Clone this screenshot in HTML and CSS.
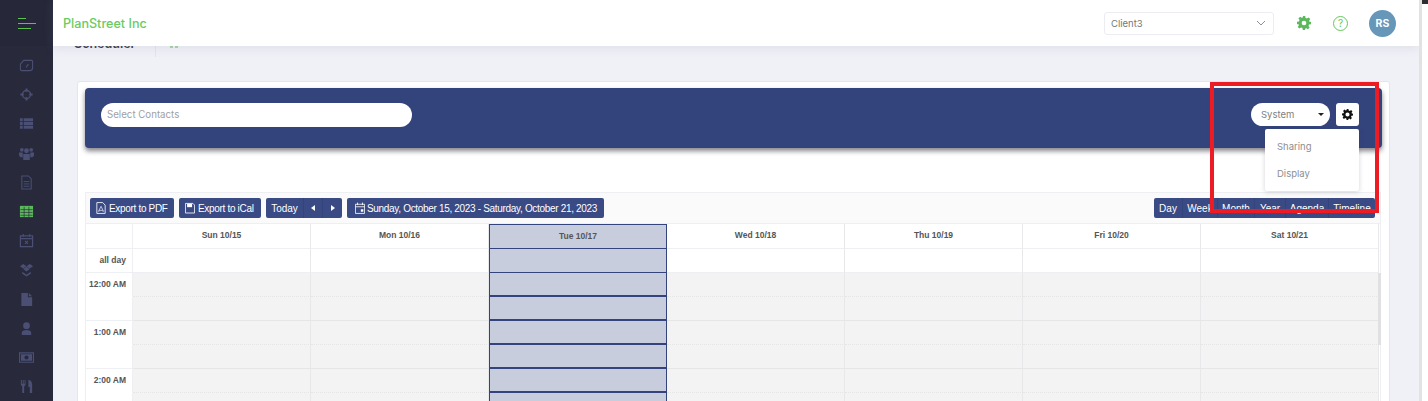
FILE: index.html
```html
<!DOCTYPE html>
<html lang="en">
<head>
<meta charset="utf-8">
<title>Scheduler</title>
<link rel="stylesheet" href="styles.css">
</head>
<body>
<aside class="sidebar">
  <div class="brand">
    <svg class="burger" width="18" height="12" viewBox="0 0 18 12"><path d="M0 .5h8M0 5.500h18M0 10.500h13" stroke="#5cc24f" stroke-width="1" fill="none"/></svg>
  </div>
  <nav class="nav">
    <svg class="ico" viewBox="0 0 16 16"><path d="M5 2.500h8.500a1 1 0 0 1 1 1v7a3 3 0 0 1-3 3H3a1.500 1.500 0 0 1-1.500-1.500V6.500z" fill="none" stroke="currentColor" stroke-width="1.200"/><path d="M7.500 10l2.500-3.500" stroke="currentColor" stroke-width="1.200"/></svg>
    <svg class="ico" viewBox="0 0 16 16"><circle cx="8" cy="8" r="4.300" fill="none" stroke="currentColor" stroke-width="1.400"/><path d="M8 1.500v3.500M8 11v3.500M1.500 8H5M11 8h3.500" stroke="currentColor" stroke-width="2.200"/></svg>
    <svg class="ico" viewBox="0 0 16 16"><path d="M1 2.500h3v3H1zM5 2.500h10v3H5zM1 6.500h3v3H1zM5 6.500h10v3H5zM1 10.500h3v3H1zM5 10.500h10v3H5z" fill="currentColor"/></svg>
    <svg class="ico" viewBox="0 0 16 16"><circle cx="3" cy="4" r="2" fill="currentColor"/><circle cx="13" cy="4" r="2" fill="currentColor"/><circle cx="8" cy="5" r="2.600" fill="currentColor"/><path d="M0 7h4v5H1.500L0 10zM12 7h4v3l-1.500 2H12zM4.500 8.500h7V15h-7z" fill="currentColor"/></svg>
    <svg class="ico" viewBox="0 0 16 16"><path d="M3 1h7l3 3v11H3z" fill="none" stroke="currentColor" stroke-width="1.100"/><path d="M5 7h6M5 9.500h6M5 12h6" stroke="currentColor"/></svg>
    <svg class="ico ico-on" viewBox="0 0 16 16"><path d="M1 2h14v12H1z" fill="currentColor"/><path d="M1.500 6h13M1.500 9h13M1.500 12h13M5.500 3v11M10.500 3v11" stroke="#282a3c" stroke-width=".7"/></svg>
    <svg class="ico" viewBox="0 0 16 16"><path d="M1.500 3h13v11.500h-13zM1.500 6h13" fill="none" stroke="currentColor" stroke-width="1.300"/><path d="M4.500 1v3M11.500 1v3M6.500 8.500l3 3M9.500 8.500l-3 3" stroke="currentColor" stroke-width="1.200"/></svg>
    <svg class="ico" viewBox="0 0 16 16"><path d="M4.500 2l3.500 2.500L4.500 7 1 4.500zM11.500 2L15 4.500 11.500 7 8 4.500zM4.500 7.500L8 5l3.500 2.500L8 10zM3.500 10.500L8 13.500l4.500-3v2L8 15.500l-4.500-3z" fill="currentColor"/></svg>
    <svg class="ico" viewBox="0 0 16 16"><path d="M2.500 1h7v4.500H14V15H2.500zM10.500 1L14 4.500h-3.500z" fill="currentColor"/></svg>
    <svg class="ico" viewBox="0 0 16 16"><circle cx="8" cy="5" r="3.600" fill="currentColor"/><path d="M3 15v-2.500C3 10.500 5 9.500 8 9.500s5 1 5 3V15z" fill="currentColor"/></svg>
    <svg class="ico" viewBox="0 0 16 16"><path d="M.5 3h15v10H.5z" fill="none" stroke="currentColor" stroke-width="1.200"/><path d="M2 4.500h12v7H2z" fill="currentColor"/><circle cx="8" cy="8" r="2.200" fill="#282a3c"/></svg>
    <svg class="ico" viewBox="0 0 16 16"><path d="M2 1v5l1.500 2v7h2V8L7 6V1H6v4H5V1H4v4H3V1zM10 8.500V1c2.500 0 4 2 4 5v9h-2.500V8.500z" fill="currentColor"/></svg>
  </nav>
</aside>

<div class="main">
  <header class="topbar">
    <div class="company">PlanStreet Inc</div>
    <div class="client">
      <span>Client3</span>
      <svg width="10" height="6" viewBox="0 0 10 6"><path d="M1 1l4 4 4-4" fill="none" stroke="#8a8f99" stroke-width="1"/></svg>
    </div>
    <svg class="top-gear" width="14" height="14" viewBox="0 0 24 24"><path fill="#5cb85c" fill-rule="evenodd" d="M10 0h4l.7 3.300 2.300 1 2.900-1.900 2.800 2.800-1.900 2.900 1 2.300L24 10v4l-3.300.7-1 2.300 1.900 2.900-2.800 2.800-2.900-1.900-2.300 1L14 24h-4l-.7-3.300-2.300-1-2.900 1.900-2.800-2.800 1.900-2.900-1-2.300L0 14v-4l3.300-.7 1-2.300-1.900-2.900 2.800-2.800 2.900 1.900 2.300-1zM12 8a4 4 0 1 0 0 8 4 4 0 0 0 0-8z"/></svg>
    <span class="help">?</span>
    <span class="avatar">RS</span>
  </header>

  <div class="content">
    <div class="subheader">
      <h1 class="page-title">Scheduler</h1>
      <span class="crumb"></span>
    </div>
    <section class="card">
      <div class="banner">
        <div class="contacts">Select Contacts</div>
        <div class="banner-tools">
          <div class="system"><span>System</span><i class="caret"></i></div>
          <button class="gear-btn" type="button" aria-label="Settings">
            <svg width="11" height="11" viewBox="0 0 24 24"><path fill="#111" fill-rule="evenodd" d="M10 0h4l.7 3.300 2.300 1 2.900-1.900 2.800 2.800-1.900 2.900 1 2.300L24 10v4l-3.300.7-1 2.300 1.900 2.900-2.800 2.800-2.900-1.900-2.300 1L14 24h-4l-.7-3.300-2.300-1-2.900 1.900-2.800-2.800 1.900-2.900-1-2.300L0 14v-4l3.300-.7 1-2.300-1.900-2.900 2.800-2.800 2.900 1.900 2.300-1zM12 7.500a4.500 4.500 0 1 0 0 9 4.500 4.500 0 0 0 0-9z"/></svg>
          </button>
          <div class="menu">
            <div class="menu-item">Sharing</div>
            <div class="menu-item">Display</div>
          </div>
        </div>
      </div>

      <div class="scheduler">
        <div class="toolbar">
          <button class="tb tb-pdf" type="button"><svg class="tb-ico" viewBox="0 0 12 14"><path d="M1 .5h7l3 3v10H1z" fill="none" stroke="#fff"/><path d="M3 11l3-6 3 6-3-1.500z" fill="none" stroke="#fff" stroke-width=".8"/></svg>Export to PDF</button>
          <button class="tb tb-ical" type="button"><svg class="tb-ico" viewBox="0 0 12 14"><path d="M.5 1.500h9l2 2v9.500H.5z" fill="none" stroke="#fff"/><path d="M2.500 2h6v4h-6z" fill="#fff"/></svg>Export to iCal</button>
          <div class="tb-group">
            <button class="tb-seg tb-today" type="button">Today</button>
            <button class="tb-seg tb-arrow" type="button"><i class="tri-l"></i></button>
            <button class="tb-seg tb-arrow" type="button"><i class="tri-r"></i></button>
          </div>
          <button class="tb tb-date" type="button"><svg class="tb-ico" viewBox="0 0 12 14"><path d="M.5 2.500h11v11H.5zM.5 5.500h11" fill="none" stroke="#fff"/><path d="M3 .5v3M9 .5v3" stroke="#fff"/><path d="M7 8.500h3v3H7z" fill="#fff"/></svg>Sunday, October 15, 2023 - Saturday, October 21, 2023</button>
          <div class="tb-group views">
            <button class="tb-seg view-day" type="button">Day</button>
            <button class="tb-seg view-week" type="button">Week</button>
            <button class="tb-seg view-month" type="button">Month</button>
            <button class="tb-seg view-year" type="button">Year</button>
            <button class="tb-seg view-agenda" type="button">Agenda</button>
            <button class="tb-seg view-timeline" type="button">Timeline</button>
          </div>
        </div>

        <div class="grid">
          <div class="row row-head">
            <div class="gut"></div>
            <div class="cell">Sun 10/15</div><div class="cell">Mon 10/16</div><div class="cell today">Tue 10/17</div><div class="cell">Wed 10/18</div><div class="cell">Thu 10/19</div><div class="cell">Fri 10/20</div><div class="cell">Sat 10/21</div>
          </div>
          <div class="row row-allday">
            <div class="gut">all day</div>
            <div class="cell"></div><div class="cell"></div><div class="cell today"></div><div class="cell"></div><div class="cell"></div><div class="cell"></div><div class="cell"></div>
          </div>
          <div class="row row-slot hour">
            <div class="gut">12:00 AM</div>
            <div class="cell"></div><div class="cell"></div><div class="cell today"></div><div class="cell"></div><div class="cell"></div><div class="cell"></div><div class="cell"></div>
          </div>
          <div class="row row-slot half">
            <div class="gut"></div>
            <div class="cell"></div><div class="cell"></div><div class="cell today"></div><div class="cell"></div><div class="cell"></div><div class="cell"></div><div class="cell"></div>
          </div>
          <div class="row row-slot hour">
            <div class="gut">1:00 AM</div>
            <div class="cell"></div><div class="cell"></div><div class="cell today"></div><div class="cell"></div><div class="cell"></div><div class="cell"></div><div class="cell"></div>
          </div>
          <div class="row row-slot half">
            <div class="gut"></div>
            <div class="cell"></div><div class="cell"></div><div class="cell today"></div><div class="cell"></div><div class="cell"></div><div class="cell"></div><div class="cell"></div>
          </div>
          <div class="row row-slot hour">
            <div class="gut">2:00 AM</div>
            <div class="cell"></div><div class="cell"></div><div class="cell today"></div><div class="cell"></div><div class="cell"></div><div class="cell"></div><div class="cell"></div>
          </div>
          <div class="row row-slot half">
            <div class="gut"></div>
            <div class="cell"></div><div class="cell"></div><div class="cell today"></div><div class="cell"></div><div class="cell"></div><div class="cell"></div><div class="cell"></div>
          </div>
          <div class="grid-thumb"></div>
        </div>
      </div>
      <div class="annotation"></div>
    </section>
  </div>
</div>
<div class="rail"><div class="rail-top"></div></div>
</body>
</html>
```

FILE: styles.css
```css
* { box-sizing: border-box; }
html, body { margin: 0; height: 401px; overflow: hidden; }
body { display: flex; background: #f0f1f7; font-family: Inter, "Open Sans", sans-serif; }
button { font: inherit; border: 0; margin: 0; padding: 0; }

.sidebar { flex: 0 0 53px; background: #282a3c; display: flex; flex-direction: column; align-items: center; }
.brand { width: 100%; height: 46px; background: #26283a; display: flex; justify-content: center; padding-top: 18px; }
.burger { display: block; }
.nav { display: flex; flex-direction: column; align-items: center; gap: 14.200px; padding-top: 12px; color: #4a4f73; }
.ico { width: 15px; height: 15px; display: block; }
.ico-on { color: #5cb85c; }

.main { flex: 1; min-width: 0; position: relative; display: flex; flex-direction: column; }
.topbar { position: absolute; z-index: 3; left: 0; right: 0; top: 0; height: 46px; background: #fff; box-shadow: 0 1px 10px rgba(120,125,150,.18); display: flex; align-items: center; padding: 0 23px 0 10px; }
.company { font-size: 12.600px; font-weight: 500; color: #6acb5f; margin-right: auto; }
.client { width: 170px; height: 23px; margin-right: 23px; border: 1px solid #ebedf2; border-radius: 3px; display: flex; align-items: center; justify-content: space-between; padding: 0 7px 0 6px; font-size: 9.500px; color: #777; }
.top-gear { margin-right: 22px; }
.help { width: 15px; height: 15px; margin-right: 21px; border: 1px solid #63c95a; border-radius: 50%; color: #63c95a; font-size: 10px; line-height: 13px; text-align: center; }
.avatar { width: 27px; height: 27px; border-radius: 50%; background: #6697b9; color: #fff; font-size: 10.500px; font-weight: 700; line-height: 27px; text-align: center; }

.content { padding: 35px 0 0 21px; }
.subheader { height: 46px; display: flex; align-items: flex-start; }
.page-title { margin: 0; font-size: 12.500px; line-height: 17px; font-weight: 600; color: #3a3d52; width: 82px; height: 22px; border-right: 1px solid #e3e5ec; }
.crumb { width: 9px; height: 2px; margin: 11px 0 0 14px; background: repeating-linear-gradient(90deg, #a5d8a0 0 3px, transparent 3px 5px); }

.card { position: relative; width: 1313px; height: 340px; margin-left: 3px; background: #fff; border: 1px solid #e4e6ee; border-radius: 3px; padding: 6px 7px 0; }
.banner { height: 60px; background: #33437b; border-radius: 4px; box-shadow: 0 3px 5px rgba(30,30,40,.55); display: flex; align-items: flex-start; justify-content: space-between; padding: 15px 23px 0 16px; }
.contacts { width: 311px; height: 24px; background: #fff; border-radius: 12px; padding-left: 6px; font-size: 9.700px; line-height: 24px; color: #a0a0a6; }
.banner-tools { position: relative; display: flex; gap: 6px; }
.system { width: 79px; height: 23px; background: #fff; border-radius: 12px; display: flex; align-items: center; justify-content: space-between; padding: 0 6px 0 10px; font-size: 9.500px; color: #808080; }
.caret { width: 0; height: 0; border: 3px solid transparent; border-top-color: #222; border-bottom: 0; }
.gear-btn { width: 23px; height: 23px; background: #fff; border-radius: 3px; display: flex; align-items: center; justify-content: center; }
.menu { position: absolute; z-index: 2; right: 0; top: 26px; width: 94px; height: 62px; background: #fff; border-radius: 2px; box-shadow: 0 1px 5px rgba(60,60,80,.22); padding-top: 4px; }
.menu-item { height: 27px; padding-left: 12px; font-size: 9.500px; line-height: 27px; color: #8e8e8e; }

.scheduler { margin-top: 44px; border: 1px solid #eeeff2; width: 1296px; background: #fafafa; }
.toolbar { height: 30px; display: flex; align-items: center; gap: 5px; padding: 0 4px; }
.tb, .tb-group { height: 20px; background: #3a4a85; color: #fff; border-radius: 2px; font-family: "Liberation Sans", Arial, sans-serif; font-size: 10px; letter-spacing: -.32px; }
.tb { display: flex; align-items: center; gap: 3px; padding: 0 6px; white-space: nowrap; }
.tb-pdf { width: 84px; padding-left: 6px; gap: 3px; }
.tb-ical { width: 82px; }
.tb-date { width: 257px; padding-left: 8px; gap: 2px; }
.tb-ico { width: 10px; height: 12px; flex: none; }
.tb-group { display: flex; }
.tb-seg { background: transparent; color: #fff; border-right: 1px solid #33437b; height: 20px; padding: 0; }
.tb-seg:last-child { border-right: 0; }
.tb-today { width: 38px; }
.tb-arrow { width: 19px; display: flex; align-items: center; justify-content: center; }
.tri-l { border: 3px solid transparent; border-right: 4px solid #fff; border-left: 0; }
.tri-r { border: 3px solid transparent; border-left: 4px solid #fff; border-right: 0; }
.views { margin-left: auto; width: 221px; margin-right: 1px; }
.view-day { width: 29px; }
.view-week { width: 35px; }
.view-month { width: 37px; }
.view-year { width: 31px; }
.view-agenda { width: 43px; }
.view-timeline { width: 46px; }

.grid { position: relative; background: #fff; font-family: "Liberation Sans", Arial, sans-serif; font-size: 8.500px; font-weight: 700; color: #555; }
.row { display: grid; grid-template-columns: 47px repeat(7, 178px); }
.row-head { height: 26px; border-top: 1px solid #eeeff2; }
.row-allday { height: 24px; }
.row-slot { height: 24px; }
.gut { border-right: 1px solid #eeeff2; border-bottom: 1px solid #eeeff2; text-align: right; padding: 6px 6px 0 0; line-height: 10px; }
.row-head .gut { padding: 0; }
.row-allday .gut { line-height: 21px; padding-top: 1px; }
.hour .gut { border-bottom-color: transparent; }
.cell { border-right: 1px solid #e8e8ea; border-bottom: 1px solid #eeeff2; }
.row-head .cell { text-align: center; line-height: 23px; }
.row-slot .cell { background: #f3f3f3; border-bottom: 1px solid #e6e6e6; }
.hour .cell { border-bottom-style: dotted; }
.cell.today { background: #c7cddd; border-left: 1px solid #33437b; border-right: 1px solid #33437b; border-bottom: 1px solid #33437b; }
.row-slot .cell.today { background: #c7cddd; border-bottom: 2px solid #33437b; }
.row-head .cell.today { border-top: 1px solid #33437b; line-height: 23px; }
.grid-thumb { position: absolute; right: -1px; top: 50px; width: 3px; height: 72px; background: #e0e0e0; }

.annotation { position: absolute; z-index: 2; left: 1132px; top: 0; width: 169px; height: 131px; border: 4px solid #ed1c24; }

.rail { flex: 0 0 9px; background: #fff; border-left: 3px solid #e2e2e2; position: relative; z-index: 4; }
.rail-top { height: 4px; background: #2e2e33; }
```
